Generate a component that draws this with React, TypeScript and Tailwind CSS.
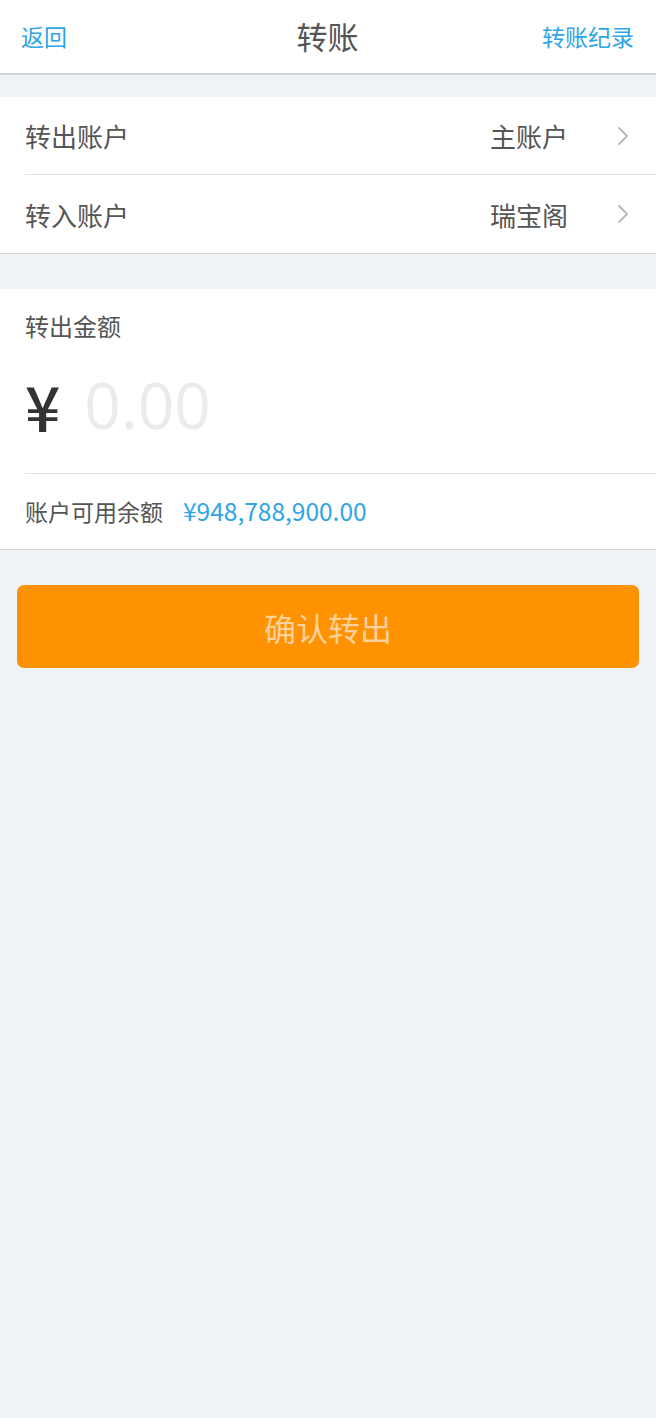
import React from 'react'

const font = { fontFamily: '"Noto Sans CJK SC", "Noto Sans", sans-serif' }

const Chevron = () => (
  <svg width="12" height="20" viewBox="0 0 12 20" fill="none" className="shrink-0">
    <path d="M2 2l8 8-8 8" stroke="#b8b8b8" strokeWidth="1.8" strokeLinecap="round" strokeLinejoin="round" />
  </svg>
)

const AccountRow = ({ label, value, divider }: { label: string; value: string; divider?: boolean }) => (
  <div className="pl-[25px]">
    <div className={`flex h-[78px] items-center pr-[27px] ${divider ? 'border-b border-[#e2e2e2]' : ''}`}>
      <span className="flex-1 text-[26px] text-[#555]">{label}</span>
      <span className="mr-[49px] text-[26px] text-[#555]">{value}</span>
      <Chevron />
    </div>
  </div>
)

export default function App() {
  return (
    <div className="min-h-[1418px] bg-[#eff2f6]" style={font}>
      <header className="flex h-[75px] items-center justify-between border-b-2 border-[#d6d6d9] bg-white pl-[21px] pr-[22px]">
        <span className="w-[120px] text-[23px] text-[#2ea5e6]">返回</span>
        <span className="text-[31px] text-[#555]">转账</span>
        <span className="w-[120px] text-right text-[23px] text-[#2ea5e6]">转账纪录</span>
      </header>

      <section className="mt-[22px] border-b border-[#d8d8d8] bg-white">
        <AccountRow label="转出账户" value="主账户" divider />
        <AccountRow label="转入账户" value="瑞宝阁" />
      </section>

      <section className="mt-[35px] border-b border-[#d8d8d8] bg-white">
        <div className="pl-[25px]">
          <div className="border-b border-[#e2e2e2] pt-[20px]">
            <div className="text-[24px] leading-[34px] text-[#555]">转出金额</div>
            <div className="flex h-[130px] items-center pb-[6px]">
              <span className="text-[62px] font-medium leading-none text-[#333]">¥</span>
              <span className="ml-[24px] text-[64px] leading-none text-[#ebebeb]" style={{ fontFamily: '"Open Sans", sans-serif' }}>0.00</span>
            </div>
          </div>
          <div className="flex h-[75px] items-center">
            <span className="text-[23px] text-[#555]">账户可用余额</span>
            <span className="ml-[20px] text-[24.5px] text-[#2ea5e6]">¥948,788,900.00</span>
          </div>
        </div>
      </section>

      <div className="px-[17px] pt-[35px]">
        <button className="flex h-[83px] w-full items-center justify-center rounded-[7px] bg-[#ff9200] text-[32px] text-[#ffd19c]">
          确认转出
        </button>
      </div>
    </div>
  )
}
